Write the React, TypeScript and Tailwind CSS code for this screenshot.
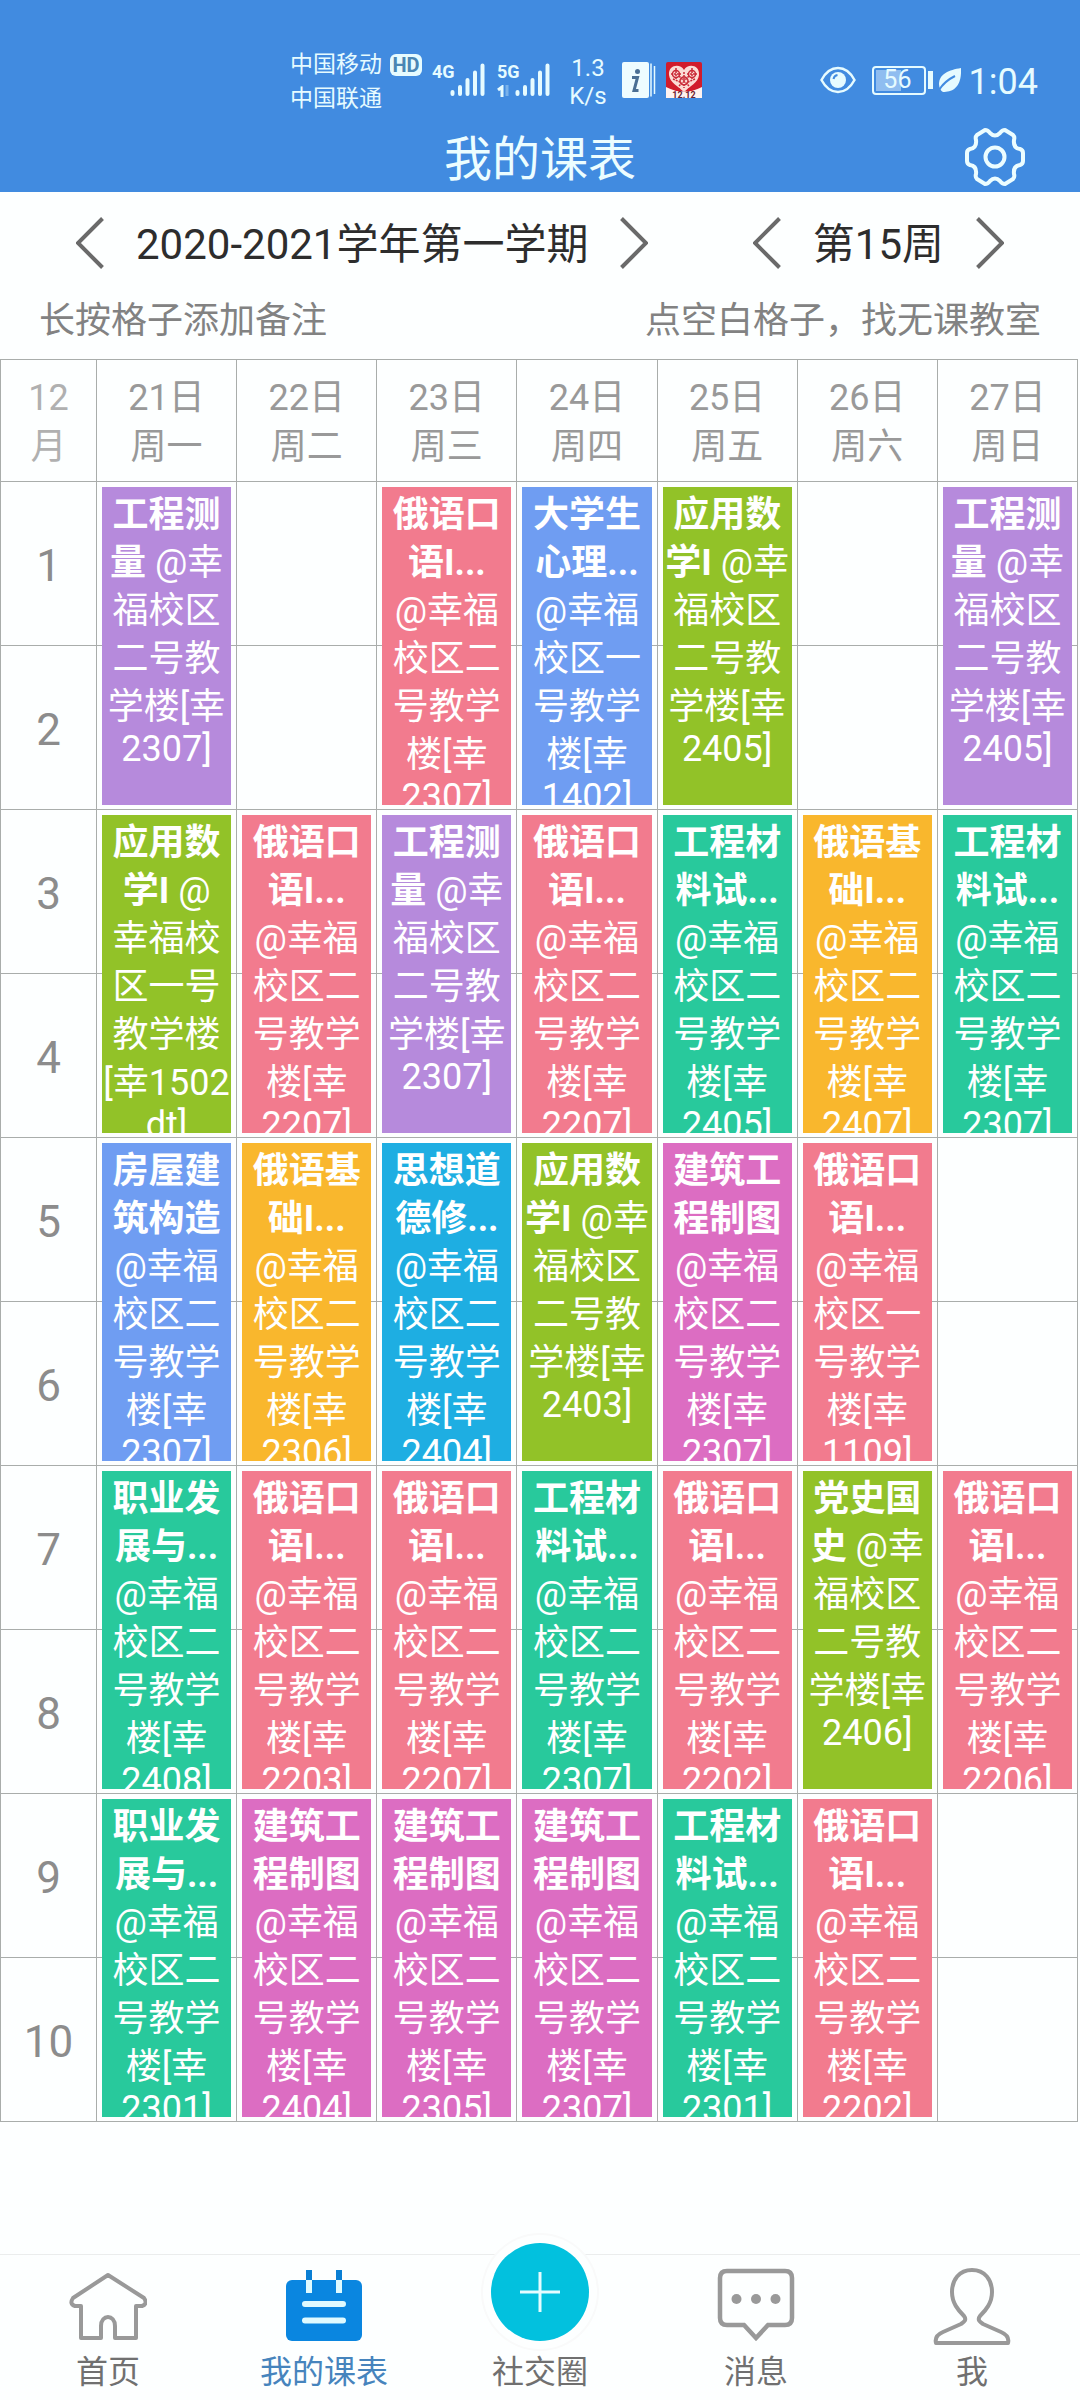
import React from "react";

type Course = {
  title: string[];
  place: string[];
  color: string;
  inline?: boolean;
};

const RED = "bg-[#f27b8e]";
const PURPLE = "bg-[#b68adc]";
const BLUE = "bg-[#6f9df2]";
const GREEN = "bg-[#92c228]";
const TEAL = "bg-[#28c99c]";
const ORANGE = "bg-[#f9b72d]";
const CYAN = "bg-[#1eaee2]";
const PINK = "bg-[#dc6dc2]";

const stacked = (title: string[], color: string, room: string, building = "二"): Course => ({
  title,
  color,
  place: ["@幸福", `校区${building}`, "号教学", "楼[幸", `${room}]`],
});

const flowing = (title: string[], color: string, room: string): Course => ({
  title,
  color,
  inline: true,
  place: ["@幸", "福校区", "二号教", "学楼[幸", `${room}]`],
});

const speaking = (room: string, building = "二") => stacked(["俄语口", "语I..."], RED, room, building);
const russian = (room: string) => stacked(["俄语基", "础I..."], ORANGE, room);
const material = (room: string) => stacked(["工程材", "料试..."], TEAL, room);
const career = (room: string) => stacked(["职业发", "展与..."], TEAL, room);
const drawing = (room: string) => stacked(["建筑工", "程制图"], PINK, room);
const survey = (room: string) => flowing(["工程测", "量"], PURPLE, room);
const maths = (room: string) => flowing(["应用数", "学I"], GREEN, room);

const schedule: (Course | null)[][] = [
  [survey("2307"), null, speaking("2307"), stacked(["大学生", "心理..."], BLUE, "1402", "一"), maths("2405"), null, survey("2405")],
  [
    { title: ["应用数", "学I"], color: GREEN, inline: true, place: ["@", "幸福校", "区一号", "教学楼", "[幸1502", "dt]"] },
    speaking("2207"),
    survey("2307"),
    speaking("2207"),
    material("2405"),
    russian("2407"),
    material("2307"),
  ],
  [
    stacked(["房屋建", "筑构造"], BLUE, "2307"),
    russian("2306"),
    stacked(["思想道", "德修..."], CYAN, "2404"),
    maths("2403"),
    drawing("2307"),
    speaking("1109", "一"),
    null,
  ],
  [career("2408"), speaking("2203"), speaking("2207"), material("2307"), speaking("2202"), flowing(["党史国", "史"], GREEN, "2406"), speaking("2206")],
  [career("2301"), drawing("2404"), drawing("2305"), drawing("2307"), material("2301"), speaking("2202"), null],
];

const days = [
  ["21日", "周一"],
  ["22日", "周二"],
  ["23日", "周三"],
  ["24日", "周四"],
  ["25日", "周五"],
  ["26日", "周六"],
  ["27日", "周日"],
];

function CourseBlock({ course }: { course: Course }) {
  const { title, place, color, inline } = course;
  const head = inline ? title.slice(0, -1) : title;
  const rest = inline ? place.slice(1, -1) : place.slice(0, -1);
  return (
    <button
      type="button"
      className={`absolute inset-x-[5px] top-[5px] z-10 flex h-[318px] flex-col items-center overflow-hidden whitespace-nowrap pt-1 text-[36px] leading-[48px] text-white ${color}`}
    >
      {head.map((t) => (
        <b key={t} className="font-bold">{t}</b>
      ))}
      {inline && (
        <span>
          <b className="font-bold">{title[title.length - 1]}</b> {place[0]}
        </span>
      )}
      {rest.map((t) => (
        <span key={t}>{t}</span>
      ))}
      <span className="leading-9">{place[place.length - 1]}</span>
    </button>
  );
}

function Chevron({ right }: { right?: boolean }) {
  return (
    <svg viewBox="0 0 28 52" className="h-[52px] w-7" fill="none" stroke="#6a6a6a" strokeWidth="4">
      <path d={right ? "M1.5 1.5 26 26 1.5 50.5" : "M26.5 1.5 2 26l24.5 24.5"} />
    </svg>
  );
}

function Stepper({ label, name }: { label: string; name: string }) {
  return (
    <div className="flex items-center gap-8">
      <button type="button" aria-label={`上一${name}`}><Chevron /></button>
      <span className="pt-1 text-[42px] leading-[52px] text-[#2d2d2d]">{label}</span>
      <button type="button" aria-label={`下一${name}`}><Chevron right /></button>
    </div>
  );
}

function Signal({ label, data }: { label: string; data?: boolean }) {
  return (
    <div className="flex h-[34px] items-end">
      <div className="flex h-full w-6 flex-col justify-between">
        <span className="text-[18px] font-bold leading-[18px]">{label}</span>
        {data && (
          <svg viewBox="0 0 14 12" className="h-3 w-3.5" fill="none" stroke="currentColor" strokeWidth="3">
            <path d="M1 5 5 2v10" />
            <path d="M10 0v11" opacity=".35" />
          </svg>
        )}
      </div>
      <svg viewBox="0 0 35 34" className="-ml-1.5 h-[34px] w-[35px]" stroke="currentColor" strokeWidth="4" strokeLinecap="round">
        <path d="M2.500 31v-2M10 31v-7M17.500 31V17M25 31V9.500M32.500 31V2.500" />
      </svg>
    </div>
  );
}

function StatusBar() {
  return (
    <div className="flex h-[68px] items-center justify-between pl-[290px] pr-[42px] text-[#e6fbff]">
      <div className="flex items-center">
        <div className="flex flex-col pt-1 text-[23px] leading-[34px]">
          <div className="flex items-center gap-2">
            中国移动
            <span className="flex h-[22px] w-8 items-center justify-center rounded-md bg-[#e6fbff] text-[20px] font-bold leading-5 text-[#4a86b4]">HD</span>
          </div>
          <span>中国联通</span>
        </div>
        <div className="ml-2.5 flex items-center gap-3">
          <Signal label="4G" />
          <Signal label="5G" data />
        </div>
        <div className="ml-4 w-11 pt-1 text-center text-[24px] leading-7">
          1.3
          <br />
          K/s
        </div>
        <svg viewBox="0 0 34 36" className="ml-3 h-9 w-[34px]">
          <rect width="27" height="36" rx="2" fill="#eefcff" />
          <path d="M29 1.500v33M32.500 4v28" stroke="#e6fbff" strokeWidth="1.500" fill="none" />
          <circle cx="15.500" cy="9.500" r="2.500" fill="#4a6f94" />
          <path d="M10 15.500h5.500l-3.500 13h4.500" stroke="#4a6f94" strokeWidth="3" fill="none" />
        </svg>
        <svg viewBox="0 0 36 36" className="ml-2.5 size-9">
          <rect width="36" height="36" rx="2" fill="#d11c2c" />
          <path d="M0 25q18 9 36 0v11H0z" fill="#fff3f0" />
          <path d="M18 8C14 1 2 3 3 13c1 8 9 11 15 17 6-6 14-9 15-17 1-10-11-12-15-5z" fill="#fbdcd6" />
          <g fill="none" stroke="#c92a38" strokeWidth="1.500">
            <circle cx="10" cy="12" r="3.500" />
            <circle cx="26" cy="12" r="3.500" />
            <circle cx="18" cy="19" r="4" />
            <path d="M18 10v16M7 17l7 3M29 17l-7 3M10 6v12M26 6v12M5 12h10M21 12h10M13 24l10-10M23 24 13 14" strokeDasharray="2 1" />
          </g>
          <path d="M0 19q6 8 14 9M36 19q-6 8-14 9" stroke="#d11c2c" strokeWidth="3" fill="none" />
          <text x="18" y="36" textAnchor="middle" fontSize="9" fontWeight="700" fill="#6d2430">12.12</text>
        </svg>
      </div>
      <div className="flex items-center">
        <svg viewBox="0 0 36 28" className="h-7 w-9" fill="none" stroke="currentColor" strokeWidth="2.500">
          <path d="M1.500 14C10-2 26-2 34.500 14 26 30 10 30 1.500 14z" />
          <circle cx="18" cy="14" r="8" fill="currentColor" stroke="none" />
          <path d="M13.500 13a5 5 0 0 1 4-4" stroke="#418be0" strokeWidth="2" />
        </svg>
        <div className="ml-4 flex h-[29px] w-[54px] items-center rounded border-2 border-current p-0.5">
          <div className="h-full w-[56%] bg-[#8fbdf0]" />
          <span className="-ml-[18px] text-[25px] leading-6">56</span>
        </div>
        <div className="ml-0.5 h-[18px] w-[5px] bg-current" />
        <svg viewBox="0 0 22 24" className="ml-1.5 h-6 w-[22px]">
          <path d="M22 0C10 2 0 6 0 16c0 4 2 7 4 8 9 0 19-4 18-24z" fill="currentColor" />
          <path d="M0 22C5 14 10 11 16 8" stroke="#418be0" strokeWidth="2" fill="none" />
        </svg>
        <span className="ml-2 pt-1 text-[36px] leading-[42px]">1:04</span>
      </div>
    </div>
  );
}

const navIcon = "h-20 w-[78px]";

function HomeIcon() {
  return (
    <svg viewBox="0 0 78 80" className={navIcon} fill="none" stroke="#999" strokeWidth="4" strokeLinejoin="round">
      <path d="M39 9 4 32q-4 6 2 8h6v32h20V60c0-12 14-12 14 0v12h21V40h6q6-2 2-8z" />
    </svg>
  );
}

function CalendarIcon() {
  return (
    <svg viewBox="0 0 78 80" className={navIcon}>
      <rect x="1" y="14" width="76" height="61" rx="6" fill="#0a86e0" />
      <path d="M24 4v10M54 4v10" stroke="#0a7fd4" strokeWidth="6" />
      <path d="M24 14v13M54 14v13" stroke="#dffaff" strokeWidth="6" />
      <path d="M20 38h38M20 54.500h38" stroke="#dffaff" strokeWidth="6" strokeLinecap="round" />
    </svg>
  );
}

function MessageIcon() {
  return (
    <svg viewBox="0 0 78 80" className={navIcon} fill="none" stroke="#999" strokeWidth="4.500">
      <path d="M10 5h58q7 0 7 7v40q0 7-7 7H51L39 72 27 59H10q-7 0-7-7V12q0-7 7-7z" />
      <g fill="#999" stroke="none">
        <circle cx="19.500" cy="33" r="5" />
        <circle cx="39" cy="33" r="5" />
        <circle cx="58.500" cy="33" r="5" />
      </g>
    </svg>
  );
}

function PersonIcon() {
  return (
    <svg viewBox="0 0 78 80" className={navIcon} fill="none" stroke="#999" strokeWidth="4" strokeLinejoin="round">
      <path d="M39 4c-13 0-20 10-20 22 0 11 6 18 12 24 3 4 0 6-3 8L10 66c-7 3-8 7-7 11h72c1-4 0-8-7-11l-18-8c-3-2-6-4-3-8 6-6 12-13 12-24C59 14 52 4 39 4z" />
    </svg>
  );
}

function NavItem({ label, active, children }: { label: string; active?: boolean; children: React.ReactNode }) {
  return (
    <a href="#" className={`flex flex-1 flex-col items-center ${active ? "text-[#4684bd]" : "text-[#707070]"}`}>
      {children}
      <span className="mt-1.5 text-[32px] leading-10">{label}</span>
    </a>
  );
}

export default function App() {
  return (
    <div className="flex min-h-screen flex-col bg-[#fdffff] font-['Roboto','Noto_Sans_CJK_SC',sans-serif]">
      <header className="bg-[#418be0] pb-0.5 pt-[46px] text-[#ecfdff]">
        <StatusBar />
        <div className="grid grid-cols-[1fr_auto_1fr] items-center px-[55px] pt-2.5">
          <h1 className="col-start-2 pt-1.5 text-[48px] leading-[60px]">我的课表</h1>
          <button type="button" aria-label="设置" className="justify-self-end">
            <svg viewBox="0 0 60 60" className="size-[60px]" fill="none" stroke="currentColor" strokeWidth="4" strokeLinejoin="round">
              <path d="M20 3q3 0 5 3 5 5 10 0 2-3 5-3l8 5q2 2 1 5-1 8 6 9 3 1 3 4v8q0 3-3 4-7 1-6 9 1 3-1 5l-8 5q-3 0-5-3-5-5-10 0-2 3-5 3l-8-5q-2-2-1-5 1-8-6-9-3-1-3-4v-8q0-3 3-4 7-1 6-9-1-3 1-5z" />
              <circle cx="30" cy="30" r="9.500" />
            </svg>
          </button>
        </div>
      </header>

      <main className="flex-1">
        <div className="flex h-[102px] items-center justify-between px-[76px]">
          <Stepper label="2020-2021学年第一学期" name="学期" />
          <Stepper label="第15周" name="周" />
        </div>
        <div className="mb-3 flex justify-between px-[39px] pt-0.5 text-[36px] leading-[51px] text-[#828282]">
          <p>长按格子添加备注</p>
          <p>点空白格子，找无课教室</p>
        </div>

        <div className="pr-0.5">
          <table className="w-full table-fixed border-collapse text-center text-[36px] [&_td]:border [&_td]:border-[#a9adab] [&_th]:border [&_th]:border-[#a9adab] [&_th]:p-0 [&_th]:pt-1 [&_th]:font-normal">
            <thead>
              <tr className="h-[122px] leading-[49px] text-[#999]">
                <th scope="col" className="w-24 text-[#b0b0b0]">
                  12
                  <br />月
                </th>
                {days.map(([date, day]) => (
                  <th scope="col" key={date}>
                    {date}
                    <br />
                    {day}
                  </th>
                ))}
              </tr>
            </thead>
            <tbody>
              {schedule.map((row, i) => (
                <React.Fragment key={i}>
                  <tr className="h-41">
                    <th scope="row" className="text-[44px] text-[#8c8c8c]">{i * 2 + 1}</th>
                    {row.map((course, d) => (
                      <td key={d} className="relative p-0">{course && <CourseBlock course={course} />}</td>
                    ))}
                  </tr>
                  <tr className="h-41">
                    <th scope="row" className="text-[44px] text-[#8c8c8c]">{i * 2 + 2}</th>
                    {row.map((_, d) => (
                      <td key={d} />
                    ))}
                  </tr>
                </React.Fragment>
              ))}
            </tbody>
          </table>
        </div>
      </main>

      <nav className="flex items-end border-t border-[#ebeded] pb-2 pt-[11px]">
        <NavItem label="首页"><HomeIcon /></NavItem>
        <NavItem label="我的课表" active><CalendarIcon /></NavItem>
        <a href="#" className="-mt-6 flex flex-1 flex-col items-center text-[#707070]">
          <svg viewBox="0 0 98 98" className="size-[98px] rounded-full bg-[#02c1de] shadow-[0_0_0_8px_#fdffff,0_0_0_10px_#f9fafa]" stroke="#e4fcff" strokeWidth="3">
            <path d="M29 49h40M49 29v40" />
          </svg>
          <span className="mt-[11px] text-[32px] leading-10">社交圈</span>
        </a>
        <NavItem label="消息"><MessageIcon /></NavItem>
        <NavItem label="我"><PersonIcon /></NavItem>
      </nav>
    </div>
  );
}
